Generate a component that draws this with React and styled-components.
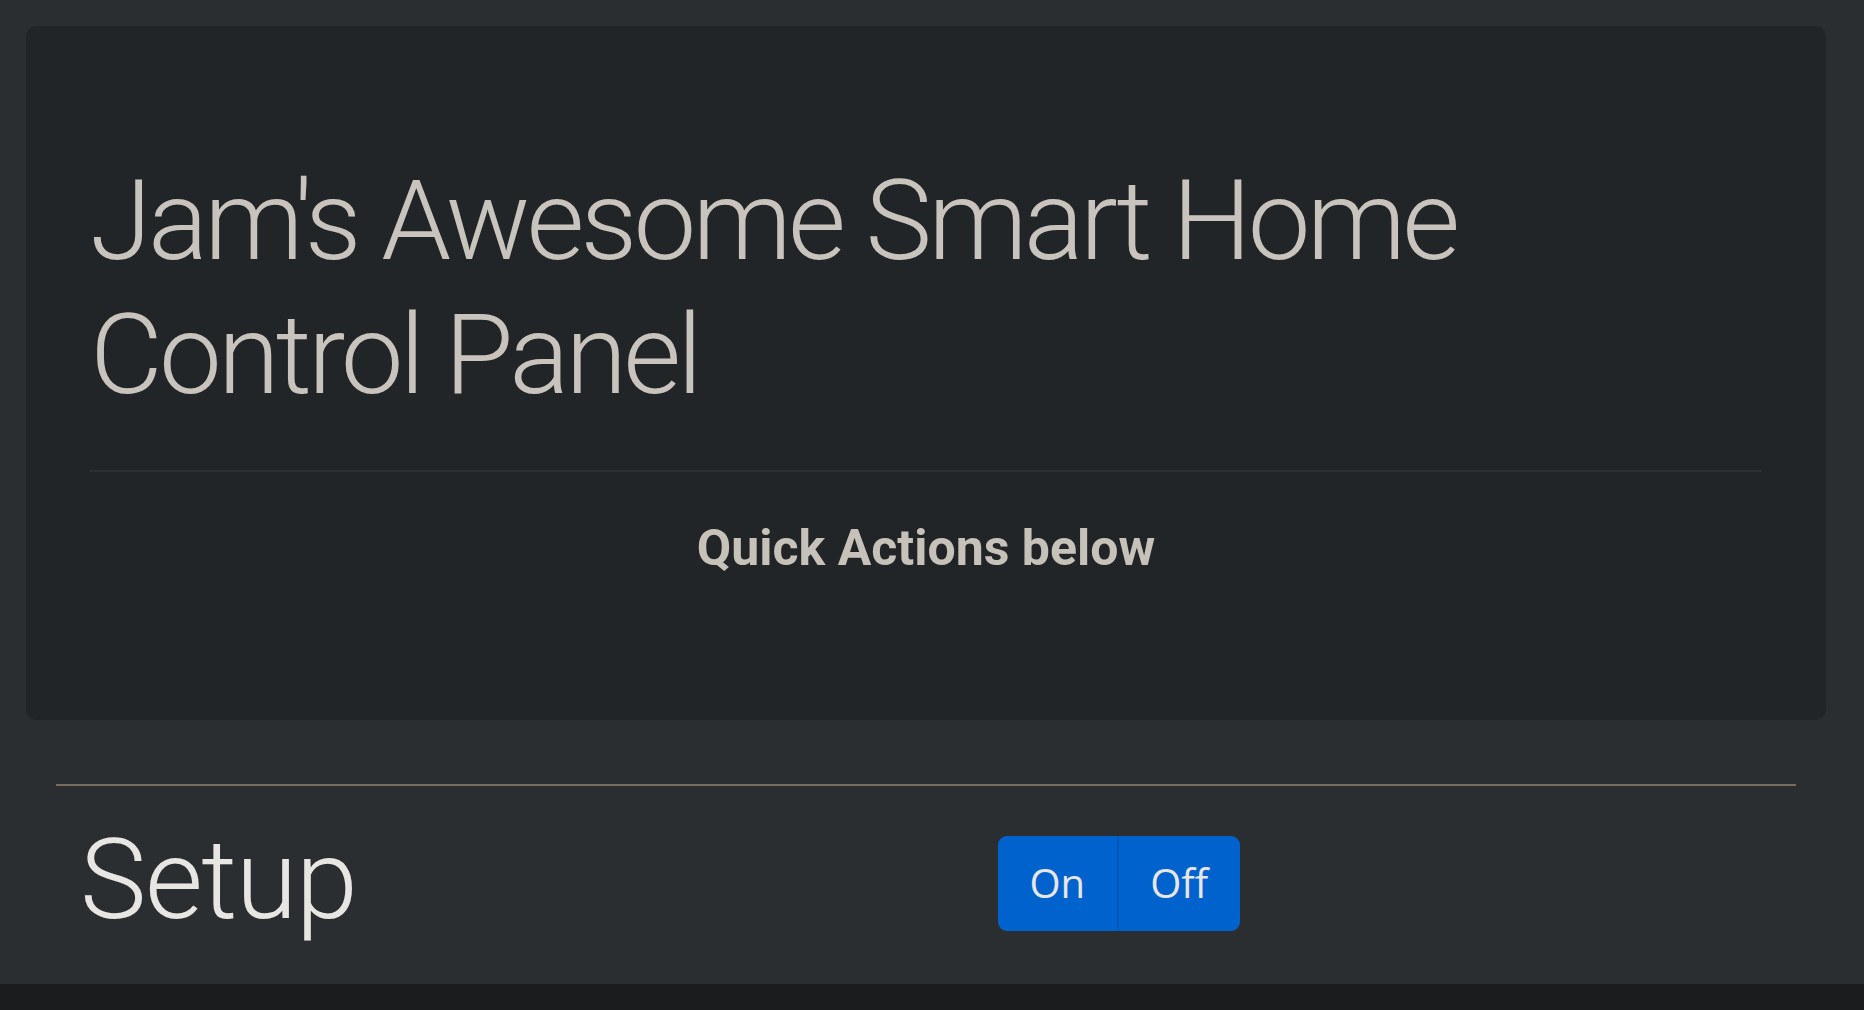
import React from 'react';
import styled, { createGlobalStyle } from 'styled-components';

const GlobalStyle = createGlobalStyle`
  html {
    background: #1b1c1e;
  }
  body {
    margin: 0;
    font-family: Roboto, "Liberation Sans", sans-serif;
  }
  * {
    box-sizing: border-box;
  }
`;

const Page = styled.div`
  min-height: 984px;
  background: #2b2e31;
  padding: 26px 38px 0 26px;
`;

const Jumbotron = styled.header`
  background: #222527;
  border-radius: 10px;
  padding: 128px 64px 126px;
  margin-bottom: 64px;
`;

const Title = styled.h1`
  margin: 0 0 47px;
  font-family: Roboto, "Liberation Sans", sans-serif;
  font-weight: 300;
  font-size: 112px;
  line-height: 1.2;
  color: #c8c3bc;
  letter-spacing: -3.8px;
`;

const Rule = styled.hr`
  margin: 0 0 46px;
  border: 0;
  border-top: 2px solid ${props => props.color || '#2c2f31'};
`;

const Subheading = styled.h4`
  margin: 0 0 16px;
  text-align: center;
  font-family: Roboto, "Liberation Sans", sans-serif;
  font-weight: 700;
  font-size: 50px;
  line-height: 1.2;
  color: #c6c1b9;
`;

const Section = styled.section`
  margin: 0 30px;
  border-top: 2px solid #776b5d;
`;

const SectionRow = styled.div`
  display: flex;
  align-items: flex-start;
  padding-left: 24px;
`;

const SectionTitle = styled.h2`
  width: 918px;
  margin: 27px 0 0;
  font-family: Roboto, "Liberation Sans", sans-serif;
  font-weight: 300;
  font-size: 112px;
  line-height: 1.2;
  color: #e8e6e3;
  letter-spacing: -1.5px;
`;

const ButtonGroup = styled.div`
  display: flex;
  margin-top: 50px;
  border-radius: 9px;
  overflow: hidden;
`;

const ToggleButton = styled.button`
  height: 95px;
  padding: 0 ${props => props.pad || '31.5px'};
  border: 0;
  border-left: ${props => (props.joined ? '2px solid #0057b7' : '0')};
  background: #0062cc;
  color: #e8e6e3;
  font-family: "Open Sans", "Noto Sans", sans-serif;
  font-size: 40px;
  line-height: 60px;
  cursor: pointer;
`;

export default function App() {
  return (
    <>
      <GlobalStyle />
      <Page>
        <Jumbotron>
          <Title>Jam's Awesome Smart Home Control Panel</Title>
          <Rule />
          <Subheading>Quick Actions below</Subheading>
        </Jumbotron>
        <Section>
          <SectionRow>
            <SectionTitle>Setup</SectionTitle>
            <ButtonGroup>
              <ToggleButton>On</ToggleButton>
              <ToggleButton joined>Off</ToggleButton>
            </ButtonGroup>
          </SectionRow>
        </Section>
      </Page>
    </>
  );
}
